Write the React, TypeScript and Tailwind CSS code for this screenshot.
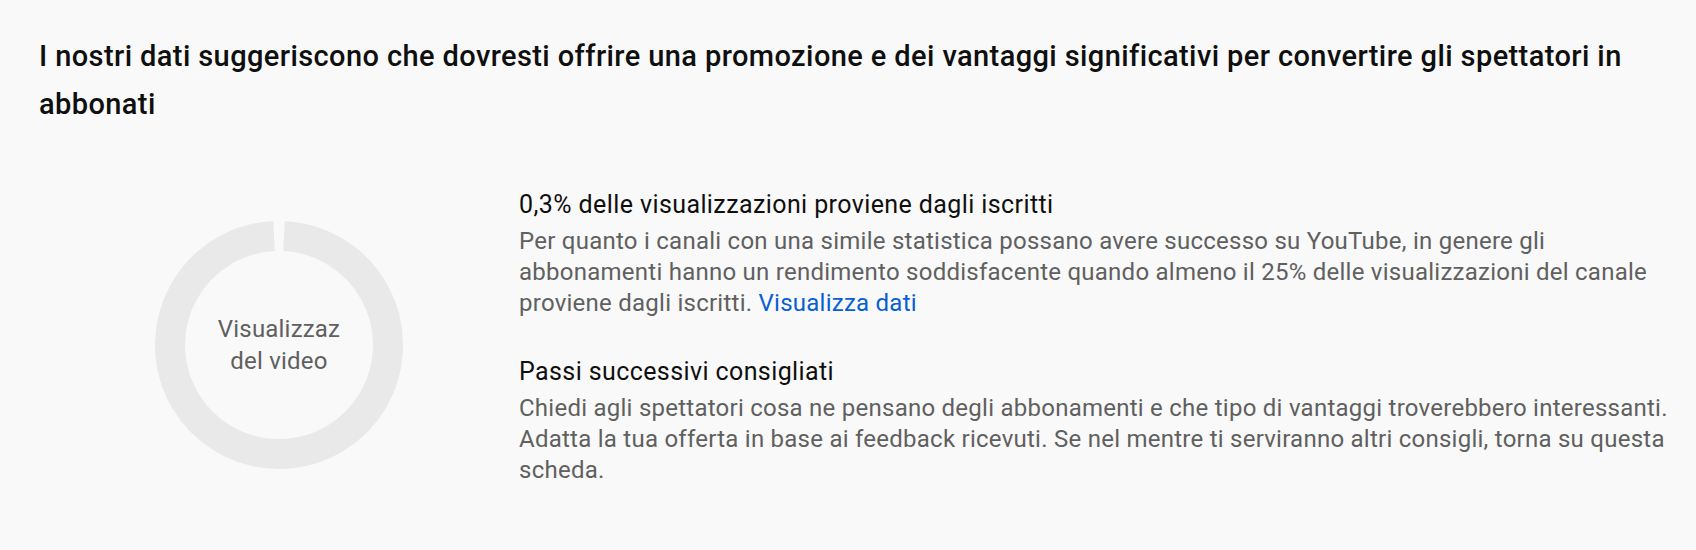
function Donut() {
  const size = 248;
  const stroke = 30;
  const r = (size - stroke) / 2;
  const c = size / 2;
  const gap = 10 / r;
  const a0 = -Math.PI / 2 + gap / 2;
  const a1 = -Math.PI / 2 - gap / 2 + Math.PI * 2;
  const p = (a: number) => `${c + r * Math.cos(a)} ${c + r * Math.sin(a)}`;
  return (
    <div className="relative w-[248px] h-[248px]">
      <svg width={size} height={size} viewBox={`0 0 ${size} ${size}`}>
        <path
          d={`M ${p(a0)} A ${r} ${r} 0 1 1 ${p(a1)}`}
          fill="none"
          stroke="#e9e9e9"
          strokeWidth={stroke}
        />
      </svg>
      <div className="absolute inset-0 flex flex-col items-center justify-center text-[24px] leading-[32px] tracking-[0.2px] text-[#606060]">
        <span>Visualizzaz</span>
        <span>del video</span>
      </div>
    </div>
  );
}

function Block({ title, children }: { title: string; children: React.ReactNode }) {
  return (
    <div className="flex flex-col gap-[5px]">
      <h3 className="text-[25px] leading-[32px] tracking-[0.4px] text-[#0f0f0f]">{title}</h3>
      <p className="text-[24px] leading-[31px] tracking-[0.25px] text-[#606060]">{children}</p>
    </div>
  );
}

export default function App() {
  return (
    <div
      className="w-full h-[550px] bg-[#f9f9f9] pl-[39px] pr-[28px] pt-[32px]"
      style={{ fontFamily: "Roboto, 'Noto Sans', sans-serif" }}
    >
      <h2 className="text-[29px] leading-[48px] font-medium tracking-[0.4px] text-[#0f0f0f]">
        I nostri dati suggeriscono che dovresti offrire una promozione e dei
        vantaggi significativi per convertire gli spettatori in abbonati
      </h2>
      <div className="flex items-start pt-[61px]">
        <div className="w-[480px] shrink-0 flex justify-center mt-[32px]">
          <Donut />
        </div>
        <div className="flex flex-col gap-[37px] flex-1">
          <Block title="0,3% delle visualizzazioni proviene dagli iscritti">
            Per quanto i canali con una simile statistica possano avere
            successo su YouTube, in genere gli abbonamenti hanno un rendimento
            soddisfacente quando almeno il 25% delle visualizzazioni del canale
            proviene dagli iscritti.{" "}
            <a className="text-[#065fd4] cursor-pointer">Visualizza dati</a>
          </Block>
          <Block title="Passi successivi consigliati">
            Chiedi agli spettatori cosa ne pensano degli abbonamenti e che tipo
            di vantaggi troverebbero interessanti. Adatta la tua offerta in
            base ai feedback ricevuti. Se nel mentre ti serviranno altri
            consigli, torna su questa scheda.
          </Block>
        </div>
      </div>
    </div>
  );
}
